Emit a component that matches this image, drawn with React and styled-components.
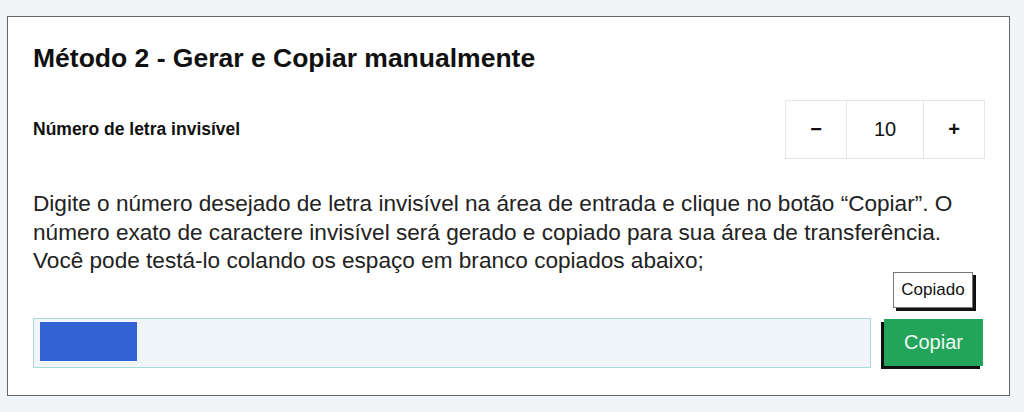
import React from "react";
import styled, { createGlobalStyle } from "styled-components";

const Global = createGlobalStyle`
  html, body { margin: 0; padding: 0; background: #f2f5f8; }
  body { font-family: "Liberation Sans", Arial, sans-serif; color: #111; }
`;

const Page = styled.div`
  padding: 16px 14px 0 7px;
`;

const Card = styled.section`
  background: #fff;
  border: 1px solid #666;
  height: 380px;
  box-sizing: border-box;
  padding: 26px 24px 0 25px;
  display: flex;
  flex-direction: column;
`;

const Title = styled.h2`
  margin: 0;
  font-size: 26.5px;
  line-height: 30px;
  font-weight: 700;
  color: #111;
`;

const Row = styled.div`
  display: flex;
  align-items: center;
  justify-content: space-between;
  margin-top: 27px;
`;

const Label = styled.label`
  font-size: 17.5px;
  font-weight: 700;
  color: #111;
`;

const Stepper = styled.div`
  display: flex;
  height: 59px;
  border: 1px solid #e6e6e6;
  box-sizing: border-box;
`;

const StepCell = styled.div`
  width: ${(p) => p.$w}px;
  display: flex;
  align-items: center;
  justify-content: center;
  font-size: 20px;
  font-weight: ${(p) => (p.$bold ? 700 : 400)};
  color: #111;
  & + & { border-left: 1px solid #e6e6e6; }
`;

const Text = styled.p`
  margin: 31px 0 0;
  font-size: 22.6px;
  line-height: 28.5px;
  color: #222;
`;

const InputRow = styled.div`
  position: relative;
  display: flex;
  align-items: flex-start;
  margin-top: 42px;
`;

const Field = styled.div`
  width: 838px;
  height: 50px;
  box-sizing: border-box;
  border: 1px solid #a6dada;
  background: #eff5f9;
  padding: 3px 6px;
`;

const Selection = styled.span`
  display: block;
  width: 97px;
  height: 39px;
  background: #3164d2;
`;

const Button = styled.button`
  margin-left: 13px;
  margin-top: 1px;
  width: 99px;
  height: 47px;
  border: none;
  background: #22a55b;
  color: #eefaf2;
  font-family: "Liberation Sans", Arial, sans-serif;
  font-size: 20px;
  box-shadow: -3px 3px 0 #111;
  cursor: pointer;
`;

const Tooltip = styled.div`
  position: absolute;
  right: 12px;
  top: -46px;
  width: 80px;
  height: 36px;
  box-sizing: border-box;
  border: 1px solid #777;
  background: #fff;
  box-shadow: 3px 3px 0 #111;
  display: flex;
  align-items: center;
  justify-content: center;
  font-size: 17px;
  color: #111;
`;

export default function App() {
  return (
    <Page>
      <Global />
      <Card>
        <Title>Método 2 - Gerar e Copiar manualmente</Title>
        <Row>
          <Label>Número de letra invisível</Label>
          <Stepper>
            <StepCell $w={60} $bold>−</StepCell>
            <StepCell $w={76}>10</StepCell>
            <StepCell $w={60} $bold>+</StepCell>
          </Stepper>
        </Row>
        <Text>
          Digite o número desejado de letra invisível na área de entrada e clique no botão “Copiar”. O
          número exato de caractere invisível será gerado e copiado para sua área de transferência.
          Você pode testá-lo colando os espaço em branco copiados abaixo;
        </Text>
        <InputRow>
          <Field>
            <Selection />
          </Field>
          <Button>Copiar</Button>
          <Tooltip>Copiado</Tooltip>
        </InputRow>
      </Card>
    </Page>
  );
}
